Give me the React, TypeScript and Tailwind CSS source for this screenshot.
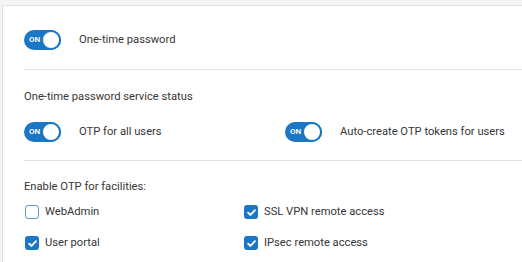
const Toggle = () => (
  <div className="relative flex h-[20px] w-[37px] shrink-0 items-center rounded-full bg-[#1b77c5]">
    <span className="pl-[5px] text-[8px] font-semibold leading-none text-white">ON</span>
    <span className="absolute right-0 top-0 h-[20px] w-[20px] rounded-full border-[2px] border-[#1b77c5] bg-white"></span>
  </div>
);

const Check = ({ on }: { on: boolean }) =>
  on ? (
    <div className="flex h-[14px] w-[14px] shrink-0 items-center justify-center rounded-[3px] bg-[#1b77c5]">
      <svg width="11" height="11" viewBox="0 0 12 12">
        <path d="M2.3 6.2 L4.9 8.7 L9.8 3.4" fill="none" stroke="white" strokeWidth="2" strokeLinecap="round" strokeLinejoin="round" />
      </svg>
    </div>
  ) : (
    <div className="h-[14px] w-[14px] shrink-0 rounded-[3px] border-[1.5px] border-[#5b9bd5] bg-white"></div>
  );

const App = () => {
  return (
    <div className="h-[262px] w-[522px] overflow-hidden bg-[#f5f5f5] pl-[2px] pt-[5px] font-['Roboto',sans-serif] text-[11.2px] text-[#363636]">
      <div className="h-full w-[560px] border-l border-t border-[#e2e2e2] bg-white pl-[21px]">
        <div className="flex h-[63px] items-center pt-[5px]">
          <Toggle />
          <span className="ml-[18px]">One-time password</span>
        </div>
        <div className="border-t border-[#e3e3e3]"></div>
        <div className="pt-[19px]">
          <div className="leading-[16px]">One-time password service status</div>
          <div className="mt-[17px] flex items-center">
            <div className="flex w-[261px] items-center">
              <Toggle />
              <span className="ml-[18px]">OTP for all users</span>
            </div>
            <div className="flex items-center">
              <Toggle />
              <span className="ml-[18px]">Auto-create OTP tokens for users</span>
            </div>
          </div>
        </div>
        <div className="mt-[18px] border-t border-[#e3e3e3]"></div>
        <div className="pt-[18px]">
          <div className="leading-[16px]">Enable OTP for facilities:</div>
          <div className="mt-[9px] grid grid-cols-[219px_1fr] gap-y-[14px] pl-[1px]">
            <div className="flex items-center gap-[6px]">
              <Check on={false} />
              <span>WebAdmin</span>
            </div>
            <div className="flex items-center gap-[6px]">
              <Check on={true} />
              <span>SSL VPN remote access</span>
            </div>
            <div className="flex items-center gap-[6px]">
              <Check on={true} />
              <span>User portal</span>
            </div>
            <div className="flex items-center gap-[6px]">
              <Check on={true} />
              <span>IPsec remote access</span>
            </div>
          </div>
        </div>
      </div>
    </div>
  );
};

export default App;
